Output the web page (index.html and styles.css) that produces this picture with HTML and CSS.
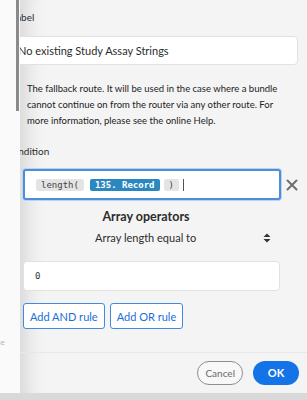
FILE: index.html
```html
<!DOCTYPE html>
<html>
<head>
    <title>Route condition</title>
    <meta name="viewport" content="width=device-width, initial-scale=1">
    <link rel="stylesheet" href="styles.css">
</head>
<body>
    <div class="page">
        <div class="side">
            <div class="side-scroll"></div>
            <span class="side-text">se</span>
        </div>

        <div class="panel">
            <div class="panel-body">
                <div class="top">
                    <label class="field-label top-label" for="routeLabel">Label</label>
                    <input type="text" id="routeLabel" class="text-input" value="No existing Study Assay Strings" />
                    <p class="note">The fallback route. It will be used in the case where a bundle cannot continue on from the router via any other route. For more information, please see the online Help.</p>
                </div>

                <label class="field-label cond-label">Condition</label>
                <div class="cond-row">
                    <div class="cond-box">
                        <span class="chip">length(</span>
                        <span class="chip chip-blue">135. Record</span>
                        <span class="chip">)</span>
                        <span class="caret"></span>
                    </div>
                    <svg class="close" width="12" height="12" viewBox="0 0 12 12">
                        <path d="M1.5 1.5 L10.5 10.5 M10.5 1.5 L1.5 10.5" stroke="#6e6e6e" stroke-width="2" fill="none" stroke-linecap="round"/>
                    </svg>
                </div>

                <div class="ops">
                    <div class="ops-title">Array operators</div>
                    <div class="select">
                        <span>Array length equal to</span>
                        <svg width="8" height="10" viewBox="0 0 8 10">
                            <path d="M4 0.5 L7.5 4 L0.5 4 Z M4 9.5 L7.5 6 L0.5 6 Z" fill="#333"/>
                        </svg>
                    </div>
                    <input type="text" class="value-input" value="0" />
                </div>

                <div class="rule-buttons">
                    <button class="rule-btn">Add AND rule</button>
                    <button class="rule-btn">Add OR rule</button>
                </div>
            </div>

            <div class="footer">
                <button class="btn-cancel">Cancel</button>
                <button class="btn-ok">OK</button>
            </div>
        </div>
    </div>
    <div class="bottom-band"></div>
</body>
</html>
```

FILE: styles.css
```css
body {
    margin: 0;
    font-family: Lato, "Noto Sans", sans-serif;
    color: #2c2c2c;
    background: #dcdcdc;
    overflow: hidden;
}
.page {
    display: flex;
    height: 393px;
}
.side {
    width: 20px;
    background: #fafafa;
    display: flex;
    flex-direction: column;
}
.side-scroll {
    width: 3px;
    height: 111px;
    margin-left: 16px;
    background: #8a8a8a;
}
.side-text {
    margin-top: 226px;
    font-size: 8px;
    color: #b5b5b5;
    margin-left: -3px;
}
.panel {
    flex: 1;
    background: #f4f4f4;
    box-shadow: inset 22px 0 20px -16px rgba(0, 0, 0, 0.13);
    overflow: hidden;
    display: flex;
    flex-direction: column;
}
.panel-body {
    padding: 0 0 0 3px;
    flex: 1;
}
.top {
    margin-left: -17px;
}
.field-label {
    display: block;
    font-size: 10px;
    height: 18px;
    line-height: 18px;
    padding-top: 8px;
}
.top-label {
    margin-left: 5px;
}
.text-input {
    display: block;
    box-sizing: border-box;
    width: 292px;
    height: 29px;
    margin-top: 10px;
    padding: 0 11px;
    border: 1px solid #e1e1e1;
    border-radius: 4px;
    background: #fff;
    font-family: Lato, sans-serif;
    font-size: 11px;
    color: #2c2c2c;
}
.note {
    margin: 16px 0 0 0;
    padding-left: 21px;
    padding-right: 20px;
    font-size: 9.5px;
    line-height: 16px;
    color: #222;
}
.cond-label {
    margin-left: -17px;
    padding-top: 13px;
}
.cond-row {
    display: flex;
    align-items: center;
    margin-top: 9px;
}
.cond-box {
    box-sizing: border-box;
    width: 258px;
    height: 31px;
    border: 2px solid #4b8fdb;
    border-radius: 3px;
    background: #fff;
    box-shadow: 0 0 0 1px #b9d3f3;
    display: flex;
    align-items: center;
    gap: 4px;
    padding-left: 11px;
}
.chip {
    font-family: "DejaVu Sans Mono", monospace;
    font-size: 9px;
    line-height: 12px;
    padding: 0 5px;
    border-radius: 2px;
    background: #e4e4e4;
    color: #444;
}
.chip-blue {
    background: #2a87c0;
    color: #fff;
    font-weight: bold;
    margin-left: 2px;
}
.caret {
    width: 1px;
    height: 12px;
    background: #555;
}
.close {
    margin-left: 5px;
}
.ops {
    width: 258px;
}
.ops-title {
    text-align: center;
    font-weight: bold;
    font-size: 12.5px;
    margin-top: 9px;
    margin-left: -12px;
}
.select {
    display: flex;
    align-items: center;
    justify-content: space-between;
    font-size: 11px;
    margin-top: 7px;
    padding: 0 10px 0 72px;
}
.value-input {
    display: block;
    box-sizing: border-box;
    width: 257px;
    height: 30px;
    margin-top: 17px;
    padding: 0 11px;
    border: 1px solid #e1e1e1;
    border-radius: 4px;
    background: #fff;
    font-family: "DejaVu Sans Mono", monospace;
    font-size: 9px;
    color: #333;
}
.rule-buttons {
    display: flex;
    gap: 5px;
    margin-top: 12px;
}
.rule-btn {
    height: 26px;
    padding: 0 6px;
    border: 1px solid #3f8be0;
    border-radius: 3px;
    background: #fff;
    color: #1a6fd6;
    font-family: Lato, sans-serif;
    font-size: 11px;
}
.footer {
    border-top: 1px solid #e8e8e8;
    height: 39px;
    display: flex;
    align-items: center;
    justify-content: flex-end;
    gap: 10px;
    padding-right: 8px;
    padding-bottom: 1px;
}
.btn-cancel {
    height: 24px;
    padding: 0 7px;
    border: 1px solid #8e8e8e;
    border-radius: 12px;
    background: #f8f8f8;
    color: #6a6a6a;
    font-family: Lato, sans-serif;
    font-size: 10px;
}
.btn-ok {
    width: 46px;
    height: 24px;
    border: none;
    border-radius: 12px;
    background: #1473e6;
    color: #fff;
    font-family: Lato, sans-serif;
    font-weight: bold;
    font-size: 11px;
}
.bottom-band {
    height: 7px;
    background: #d9d9d9;
}
```
